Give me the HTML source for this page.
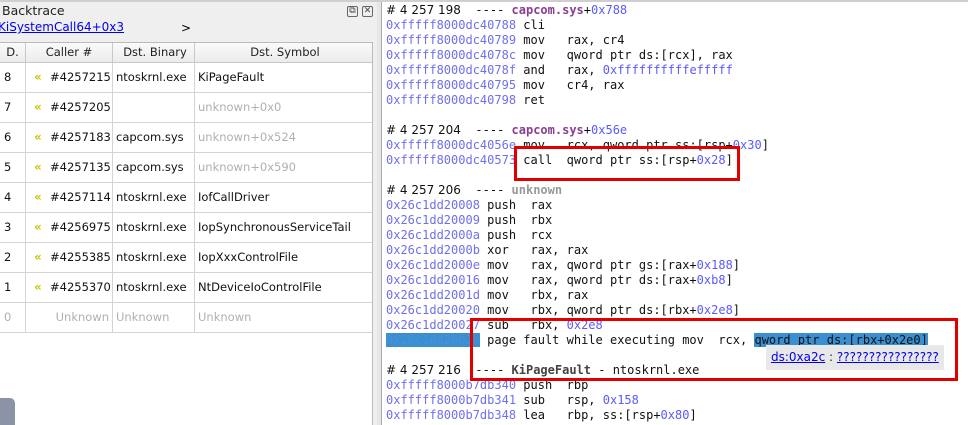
<!DOCTYPE html>
<html><head><meta charset="utf-8"><style>
*{margin:0;padding:0;box-sizing:border-box}
body{width:968px;height:425px;overflow:hidden;background:#efefef;position:relative;font-family:"DejaVu Sans","Liberation Sans",sans-serif;}
.top{position:absolute;left:0;top:0;width:968px;height:2px;background:#cfcfcf}
.title{position:absolute;left:2px;top:3px;font-size:12.5px;color:#222}
.link{position:absolute;left:-2px;top:20px;font-size:12px;color:#0000ee;text-decoration:underline}
.gt{position:absolute;left:181px;top:21px;font-size:12px}
.ic{position:absolute;top:6px;width:11px;height:11px;border:1px solid #666;border-radius:2px;font-size:9px;line-height:9px;text-align:center;color:#444}
.tbl{position:absolute;left:0;top:42px;width:373px;height:383px;background:#fff;border-top:1px solid #bbb;border-right:1px solid #bbb}
.hdr{position:absolute;left:0;top:0;width:372px;height:20px;background:linear-gradient(#fafafa,#ececec);border-bottom:1px solid #c8c8c8;font-size:11.5px;color:#222}
.row{position:absolute;left:0;width:372px;height:30px;border-bottom:1px solid #d4d4d4;font-size:11.5px;color:#111}
.c{position:absolute;top:0;height:100%;border-right:1px solid #d4d4d4;white-space:nowrap;overflow:hidden}
.hdr .c{border-right:1px solid #c8c8c8;text-align:center;line-height:19px}
.row .c{line-height:29px}
.c0{left:0;width:26px;padding-left:4px}
.c1{left:26px;width:87px}
.c2{left:113px;width:82px;padding-left:3px}
.c3{left:195px;width:177px;padding-left:3px;border-right:none!important}
.hdr .c0{padding-left:0}
.g{color:#b0b0b0}
.chev{position:absolute;left:8px;top:0;color:#c8c400;font-weight:bold;font-size:12px}
.num{position:absolute;left:24px;top:0}
.split{position:absolute;left:377px;top:2px;width:4px;height:423px;background:#e6e6e6}
.right{position:absolute;left:381px;top:2px;width:587px;height:423px;background:#fff;border-left:1px solid #aaa}
.code{position:absolute;left:4px;top:1px;font-family:"DejaVu Sans Mono","Liberation Mono",monospace;font-size:12px;line-height:15px;color:#111;white-space:pre}
.a{color:#6f6fee}.h{color:#5a5aff}.p{color:#8a3f90;font-weight:bold}.u{color:#999;font-weight:bold}
.s{font-family:"DejaVu Sans",sans-serif;font-size:12px}
.box{position:absolute;border:3px solid #e00000}
.sel{background:#3a8fd0}
.tip{position:absolute;left:384px;top:343px;width:178px;height:25px;background:#e8e8e8;font-size:12px;line-height:24px;padding-left:5px;color:#222}
.tip u{color:#0000ee}
.wid{position:absolute;left:0;top:398px;width:15px;height:27px;background:#8a94a6;border-radius:0 5px 0 0}
</style></head><body>
<div class="top"></div>
<div class="title">Backtrace</div>
<div class="link">KiSystemCall64+0x3</div>
<div class="gt">&gt;</div>
<div class="ic" style="left:347px">⧉</div><div class="ic" style="left:362px">✕</div>
<div class="tbl">
<div class="hdr"><div class="c c0">D.</div><div class="c c1">Caller #</div><div class="c c2">Dst. Binary</div><div class="c c3">Dst. Symbol</div></div>
<div class="row" style="top:20px"><div class="c c0">8</div><div class="c c1"><span class="chev">«</span><span class="num">#4257215</span></div><div class="c c2">ntoskrnl.exe</div><div class="c c3">KiPageFault</div></div>
<div class="row" style="top:50px"><div class="c c0">7</div><div class="c c1"><span class="chev">«</span><span class="num">#4257205</span></div><div class="c c2"></div><div class="c c3 g">unknown+0x0</div></div>
<div class="row" style="top:80px"><div class="c c0">6</div><div class="c c1"><span class="chev">«</span><span class="num">#4257183</span></div><div class="c c2">capcom.sys</div><div class="c c3 g">unknown+0x524</div></div>
<div class="row" style="top:110px"><div class="c c0">5</div><div class="c c1"><span class="chev">«</span><span class="num">#4257135</span></div><div class="c c2">capcom.sys</div><div class="c c3 g">unknown+0x590</div></div>
<div class="row" style="top:140px"><div class="c c0">4</div><div class="c c1"><span class="chev">«</span><span class="num">#4257114</span></div><div class="c c2">ntoskrnl.exe</div><div class="c c3">IofCallDriver</div></div>
<div class="row" style="top:170px"><div class="c c0">3</div><div class="c c1"><span class="chev">«</span><span class="num">#4256975</span></div><div class="c c2">ntoskrnl.exe</div><div class="c c3">IopSynchronousServiceTail</div></div>
<div class="row" style="top:200px"><div class="c c0">2</div><div class="c c1"><span class="chev">«</span><span class="num">#4255385</span></div><div class="c c2">ntoskrnl.exe</div><div class="c c3">IopXxxControlFile</div></div>
<div class="row" style="top:230px"><div class="c c0">1</div><div class="c c1"><span class="chev">«</span><span class="num">#4255370</span></div><div class="c c2">ntoskrnl.exe</div><div class="c c3">NtDeviceIoControlFile</div></div>
<div class="row" style="top:260px"><div class="c c0 g">0</div><div class="c c1 g" style="text-align:right;padding-right:3px">Unknown</div><div class="c c2 g">Unknown</div><div class="c c3 g">Unknown</div></div>
</div>
<div class="wid"></div>
<div class="split"></div>
<div class="right">
<div class="code"><span class="s"># 4 257 198</span>  ---- <span class="p">capcom.sys</span>+<span class="h">0x788</span>
<span class="a">0xfffff8000dc40788</span> cli
<span class="a">0xfffff8000dc40789</span> mov   rax, cr4
<span class="a">0xfffff8000dc4078c</span> mov   qword ptr ds:[rcx], rax
<span class="a">0xfffff8000dc4078f</span> and   rax, <span class="h">0xffffffffffefffff</span>
<span class="a">0xfffff8000dc40795</span> mov   cr4, rax
<span class="a">0xfffff8000dc40798</span> ret

<span class="s"># 4 257 204</span>  ---- <span class="p">capcom.sys</span>+<span class="h">0x56e</span>
<span class="a">0xfffff8000dc4056e</span> mov   rcx, qword ptr ss:[rsp+<span class="h">0x30</span>]
<span class="a">0xfffff8000dc40573</span> call  qword ptr ss:[rsp+<span class="h">0x28</span>]

<span class="s"># 4 257 206</span>  ---- <span class="u">unknown</span>
<span class="a">0x26c1dd20008</span> push  rax
<span class="a">0x26c1dd20009</span> push  rbx
<span class="a">0x26c1dd2000a</span> push  rcx
<span class="a">0x26c1dd2000b</span> xor   rax, rax
<span class="a">0x26c1dd2000e</span> mov   rax, qword ptr gs:[rax+<span class="h">0x188</span>]
<span class="a">0x26c1dd20016</span> mov   rax, qword ptr ds:[rax+<span class="h">0xb8</span>]
<span class="a">0x26c1dd2001d</span> mov   rbx, rax
<span class="a">0x26c1dd20020</span> mov   rbx, qword ptr ds:[rbx+<span class="h">0x2e8</span>]
<span class="a">0x26c1dd20027</span> sub   rbx, <span class="h">0x2e8</span>
<span class="sel" style="color:#4a8fd8">0x26c1dd2002e</span> page fault while executing mov  rcx, <span class="sel">qword ptr ds:[rbx+0x2e0]</span>

<span class="s"># 4 257 216</span>  ---- <span class="p" style="color:#444">KiPageFault</span> - ntoskrnl.exe
<span class="a">0xfffff8000b7db340</span> push  rbp
<span class="a">0xfffff8000b7db341</span> sub   rsp, <span class="h">0x158</span>
<span class="a">0xfffff8000b7db348</span> lea   rbp, ss:[rsp+<span class="h">0x80</span>]</div>
<div class="tip"><u>ds:0xa2c</u> : <u>????????????????</u></div>
<div class="box" style="left:132px;top:144px;width:226px;height:35px"></div>
<div class="box" style="left:88px;top:316px;width:488px;height:63px"></div>
</div>
</body></html>
